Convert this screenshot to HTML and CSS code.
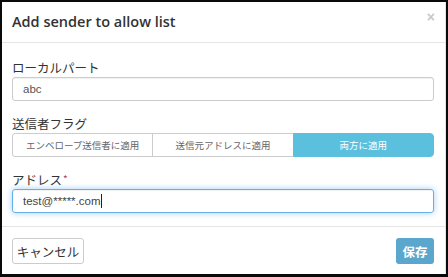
FILE: index.html
```html
<!DOCTYPE html>
<html lang="ja">
<head>
<meta charset="utf-8">
<link rel="stylesheet" href="styles.css">
</head>
<body>
<div class="frame">
  <div class="modal">
    <div class="modal-header">
      <h4 class="modal-title">Add sender to allow list</h4>
      <span class="close">×</span>
    </div>
    <div class="modal-body">
      <label class="label">ローカルパート</label>
      <div class="input">abc</div>
      <label class="label label-gap">送信者フラグ</label>
      <div class="btn-group">
        <div class="seg">エンベロープ送信者に適用</div>
        <div class="seg">送信元アドレスに適用</div>
        <div class="seg active">両方に適用</div>
      </div>
      <label class="label label-gap">アドレス<span class="req">*</span></label>
      <div class="input focus">test@*****.com<span class="caret"></span></div>
    </div>
    <div class="modal-footer">
      <div class="btn btn-default">キャンセル</div>
      <div class="btn btn-save">保存</div>
    </div>
  </div>
</div>
</body>
</html>
```
FILE: styles.css
```css
html, body {
  margin: 0;
  padding: 0;
  background: #000;
}
.frame {
  width: 448px;
  height: 277px;
  box-sizing: border-box;
  border-top: 2px solid #0a0a0a;
  border-left: 2px solid #0a0a0a;
  border-right: 2px solid #0a0a0a;
  border-bottom: 3px solid #0a0a0a;
  background: #fff;
  overflow: hidden;
}
.modal {
  height: 100%;
  display: flex;
  flex-direction: column;
  background: #fff;
  border-right: 1px solid #e6e6e6;
  font-family: "Noto Sans CJK JP", "Liberation Sans", sans-serif;
  color: #333;
}
.modal-header {
  height: 40px;
  display: flex;
  align-items: center;
  justify-content: space-between;
  padding: 0 10px;
  border-bottom: 1px solid #e5e5e5;
}
.modal-title {
  margin: 0;
  font-family: "Open Sans", "Liberation Sans", sans-serif;
  font-size: 14.5px;
  font-weight: 600;
  color: #333;
  position: relative;
  top: -1px;
}
.close {
  font-family: "Liberation Sans", sans-serif;
  font-size: 14px;
  font-weight: bold;
  color: #c8c8c8;
  position: relative;
  top: -5px;
}
.modal-body {
  padding: 16px 11px 0 10px;
  display: flex;
  flex-direction: column;
}
.label {
  font-size: 12.5px;
  line-height: 18px;
  height: 18px;
  color: #333;
}
.label-gap {
  margin-top: 14px;
}
.req {
  color: #a94442;
  font-size: 10px;
  margin-left: 1px;
  position: relative;
  top: -2px;
}
.input {
  height: 24px;
  box-sizing: border-box;
  border: 1px solid #ccc;
  border-radius: 3px;
  padding: 0 10px;
  font-family: "Liberation Sans", sans-serif;
  font-size: 11.5px;
  line-height: 22px;
  color: #555;
  box-shadow: inset 0 1px 1px rgba(0,0,0,.06);
}
.input.focus {
  border-color: #66afe9;
  box-shadow: inset 0 1px 1px rgba(0,0,0,.06), 0 0 6px rgba(102,175,233,.6);
  color: #444;
}
.caret {
  display: inline-block;
  width: 1px;
  height: 14px;
  background: #222;
  vertical-align: middle;
  position: relative;
  top: -1px;
}
.btn-group {
  display: flex;
  height: 24px;
}
.seg {
  flex: 1;
  box-sizing: border-box;
  border: 1px solid #ccc;
  display: flex;
  align-items: center;
  justify-content: center;
  font-size: 9.5px;
  color: #666;
}
.seg + .seg {
  margin-left: -1px;
}
.seg:first-child {
  border-radius: 3px 0 0 3px;
}
.seg.active {
  background: #5bc0de;
  border-color: #5bc0de;
  color: #fff;
  border-radius: 0 4px 4px 0;
}
.modal-footer {
  margin-top: 13px;
  border-top: 1px solid #e5e5e5;
  padding: 11px 11px 0 10px;
  display: flex;
  justify-content: space-between;
}
.btn {
  height: 26px;
  box-sizing: border-box;
  border-radius: 3px;
  display: flex;
  align-items: center;
  justify-content: center;
  font-size: 12.5px;
}
.btn-default {
  width: 72px;
  border: 1px solid #ccc;
  color: #333;
  background: #fff;
}
.btn-save {
  width: 38px;
  background: #5aa6cc;
  color: #fff;
  font-weight: bold;
}
```
